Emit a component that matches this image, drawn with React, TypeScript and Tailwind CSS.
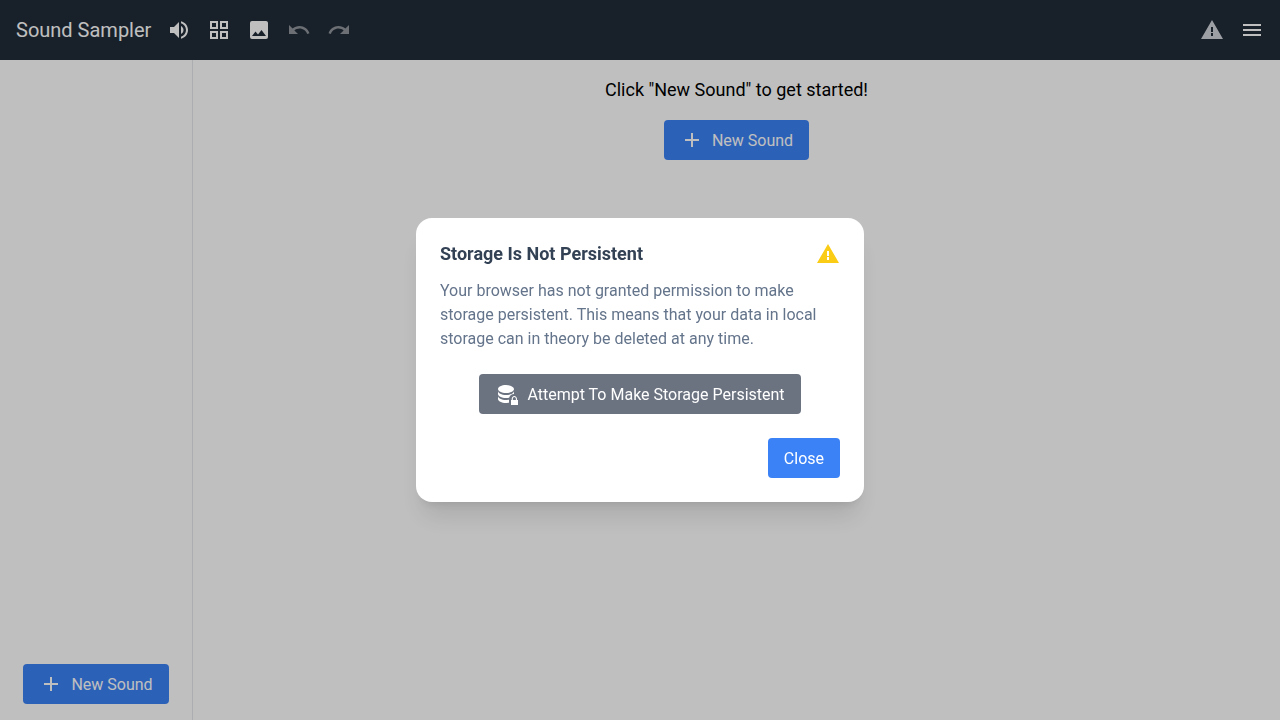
import type { ReactNode } from "react";

const paths = {
  volume:
    "M14,3.23V5.29C16.89,6.15 19,8.83 19,12C19,15.17 16.89,17.84 14,18.7V20.77C18,19.86 21,16.28 21,12C21,7.72 18,4.14 14,3.23M16.5,12C16.5,10.23 15.5,8.71 14,7.97V16C15.5,15.29 16.5,13.76 16.5,12M3,9V15H7L12,20V4L7,9H3Z",
  grid: "M3 11H11V3H3M5 5H9V9H5M13 21H21V13H13M15 15H19V19H15M3 21H11V13H3M5 15H9V19H5M13 3V11H21V3M19 9H15V5H19Z",
  image:
    "M8.5,13.5L11,16.5L14.5,12L19,18H5M21,19V5C21,3.89 20.1,3 19,3H5A2,2 0 0,0 3,5V19A2,2 0 0,0 5,21H19A2,2 0 0,0 21,19Z",
  undo: "M12.5,8C9.85,8 7.45,9 5.6,10.6L2,7V16H11L7.38,12.38C8.77,11.22 10.54,10.5 12.5,10.5C16.04,10.5 19.08,12.81 20.15,16L22.5,15.22C21.11,11.03 17.15,8 12.5,8Z",
  redo: "M18.4,10.6C16.55,9 14.15,8 11.5,8C6.85,8 2.92,11.03 1.54,15.22L3.9,16C4.95,12.81 7.95,10.5 11.5,10.5C13.45,10.5 15.23,11.22 16.62,12.38L13,16H22V7L18.4,10.6Z",
  alert: "M13 14H11V9H13M13 18H11V15H13M1 21H23L12 2L1 21Z",
  menu: "M3,6H21V8H3V6M3,11H21V13H3V11M3,16H21V18H3V16Z",
  plus: "M19,13H13V19H11V13H5V11H11V5H13V11H19V13Z",
  databaseLock:
    "M11 3C6.58 3 3 4.79 3 7S6.58 11 11 11 19 9.21 19 7 15.42 3 11 3M3 9V12C3 14.21 6.58 16 11 16C12.1 16 13.15 15.89 14.1 15.69C14.8 13.5 16.6 12 19 12V9C19 11.21 15.42 13 11 13S3 11.21 3 9M3 14V17C3 19.21 6.58 21 11 21C11.7 21 12.36 20.95 14 20.77V17.77C12.36 17.95 11.7 18 11 18C6.58 18 3 16.21 3 14M22 18V17C22 15.34 20.66 14 19.3 14S16.7 15.34 16.7 17V18H16V23H23V18H22M20.9 18H17.8V17C17.8 16 18.5 15.1 19.35 15.1S20.9 16 20.9 17V18Z",
};

function Icon({ name, className = "" }: { name: keyof typeof paths; className?: string }) {
  return (
    <svg viewBox="0 0 24 24" className={`size-6 shrink-0 fill-current ${className}`} aria-hidden="true">
      <path d={paths[name]} />
    </svg>
  );
}

function Button({ icon, className, children }: { icon?: keyof typeof paths; className: string; children: ReactNode }) {
  return (
    <button className={`flex h-10 items-center gap-2 rounded px-4 text-base text-white ${className}`}>
      {icon && <Icon name={icon} />}
      <span className="pt-0.5">{children}</span>
    </button>
  );
}

function NewSoundButton() {
  return (
    <Button icon="plus" className="bg-[#3b82f6]">
      New Sound
    </Button>
  );
}

export default function App() {
  return (
    <div className="flex h-screen flex-col overflow-hidden bg-white font-['Roboto',sans-serif] text-black">
      <header className="flex h-[60px] shrink-0 items-center justify-between bg-[#212c38] px-4 text-white">
        <div className="flex items-center gap-4">
          <h1 className="text-xl">Sound Sampler</h1>
          <Icon name="volume" />
          <Icon name="grid" />
          <Icon name="image" />
          <Icon name="undo" className="opacity-50" />
          <Icon name="redo" className="opacity-50" />
        </div>
        <div className="flex items-center gap-4">
          <Icon name="alert" className="text-[#d1d5db]" />
          <Icon name="menu" />
        </div>
      </header>
      <div className="flex min-h-0 flex-1">
        <aside className="flex w-[193px] flex-col items-center justify-end border-r border-[#e5e7eb] pb-4">
          <NewSoundButton />
        </aside>
        <main className="flex flex-1 flex-col items-center gap-4 pt-4">
          <p className="text-lg">Click "New Sound" to get started!</p>
          <NewSoundButton />
        </main>
      </div>
      <div className="fixed inset-0 flex items-center justify-center bg-black/25">
        <div role="dialog" className="w-[448px] rounded-2xl bg-white p-6 shadow-xl">
          <div className="flex h-6 items-center justify-between">
            <h2 className="text-lg leading-6 font-bold text-[#334155]">Storage Is Not Persistent</h2>
            <Icon name="alert" className="text-[#facc15]" />
          </div>
          <p className="mt-[13px] text-base text-[#64748b]">
            Your browser has not granted permission to make storage persistent. This means that your data in local
            storage can in theory be deleted at any time.
          </p>
          <div className="mt-[23px] flex justify-center">
            <Button icon="databaseLock" className="bg-[#6b7280]">
              Attempt To Make Storage Persistent
            </Button>
          </div>
          <div className="mt-6 flex justify-end">
            <Button className="bg-[#3b82f6]">Close</Button>
          </div>
        </div>
      </div>
    </div>
  );
}
